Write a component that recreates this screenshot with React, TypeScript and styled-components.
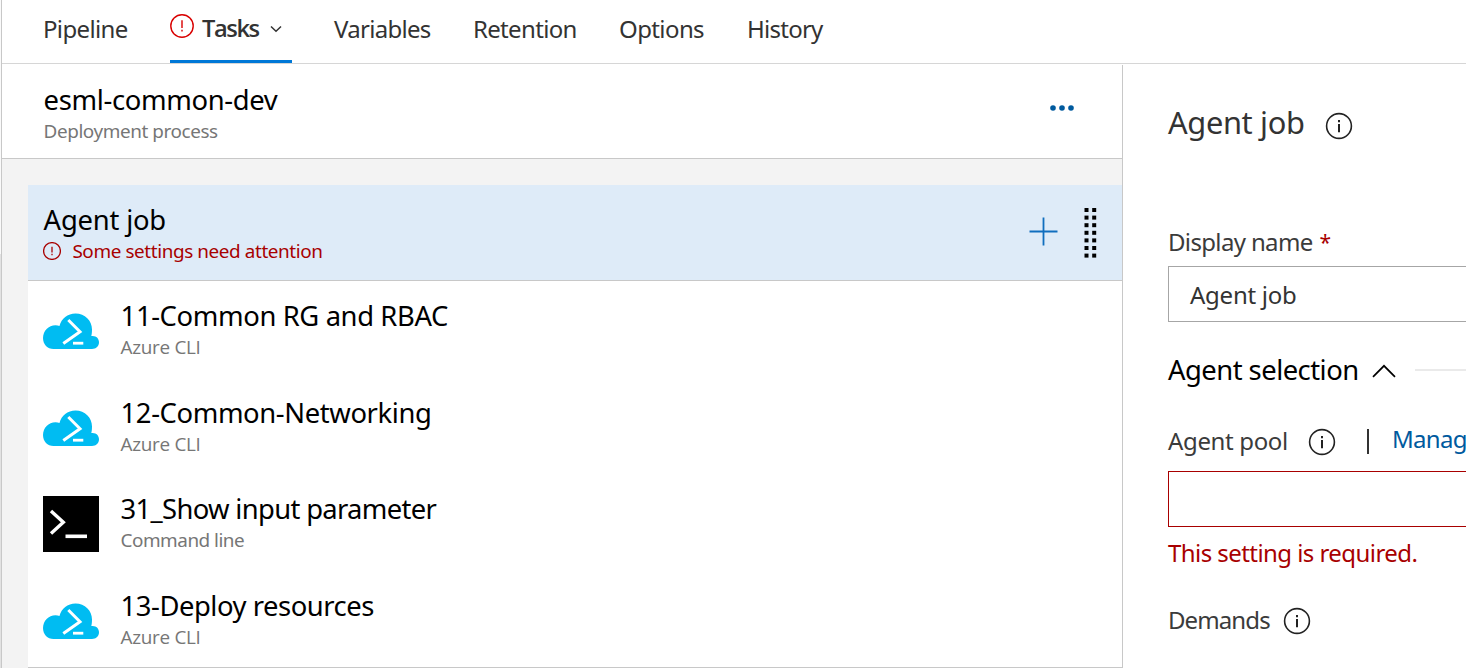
import React from 'react';
import styled, { createGlobalStyle } from 'styled-components';

const Global = createGlobalStyle`
  *, *::before, *::after { box-sizing: border-box; }
  body { margin: 0; background: #fff; overflow: hidden; }
  body, input, button { font-family: "Noto Sans", "Open Sans", sans-serif; }
  svg { display: block; flex: none; }
`;

const Page = styled.div`
  height: 668px;
  overflow: hidden;
  display: flex;
  flex-direction: column;
  padding-left: 1px;
  background: linear-gradient(#fafafa 254px, #e2e2e2 254px);
`;

const Frame = styled.div`
  flex: 1;
  min-height: 0;
  display: flex;
  flex-direction: column;
  border-left: 1px solid #c8c8c8;
  background: #fff;
`;

const Nav = styled.nav`
  height: 64px;
  flex: none;
  display: flex;
  align-items: stretch;
  gap: 42px;
  padding-left: 41px;
  border-bottom: 1px solid #d6d6d6;
  color: #333;
  font-size: 24px;
  line-height: 58px;
`;

const Tab = styled.a<{ $w: number; $track: number }>`
  width: ${(p) => p.$w}px;
  letter-spacing: ${(p) => p.$track}px;
  white-space: nowrap;
`;

const ActiveTab = styled.a`
  width: 122px;
  display: flex;
  align-items: flex-start;
  border-bottom: 3px solid #0078d7;
  font-family: "Open Sans", sans-serif;
  font-weight: 600;
  font-size: 23.7px;
  line-height: 56px;
  letter-spacing: -1.4px;
`;

const TabAlert = styled.span`
  margin: 14px 8px 0 0;
`;

const TabChevron = styled.span`
  margin: 25px 0 0 auto;
  padding-right: 10px;
`;

const Body = styled.div`
  flex: 1;
  min-height: 0;
  display: flex;
`;

const Left = styled.section`
  width: 1121px;
  flex: none;
  display: flex;
  flex-direction: column;
  margin-top: 1px;
  border-right: 1px solid #c8c8c8;
`;

const StageHeader = styled.header`
  height: 94px;
  flex: none;
  display: flex;
  justify-content: space-between;
  padding: 17px 48px 0 41.6px;
  border-bottom: 1px solid #c8c8c8;
`;

const MoreButton = styled.span`
  padding-top: 23px;
`;

const JobArea = styled.div`
  flex: 1;
  background: #f3f3f3;
  padding: 26px 0 0 26px;
`;

const JobCard = styled.div`
  background: #fff;
  border-bottom: 1px solid #c8c8c8;
`;

const JobRow = styled.div`
  height: 96px;
  display: flex;
  padding: 17px 25px 0 15px;
  background: #deebf8;
  border-bottom: 1px solid #c8c8c8;
`;

const JobTitle = styled.div`
  padding-left: 0.6px;
`;

const JobActions = styled.div`
  margin-left: auto;
  display: flex;
  align-items: flex-start;
  gap: 26px;
  padding-top: 6px;
`;

const AddButton = styled.span`
  padding-top: 8.5px;
`;

const TaskRow = styled.div`
  height: 96.5px;
  display: flex;
  gap: 21.6px;
  padding: 17px 0 0 15px;
`;

const TaskIcon = styled.div`
  padding-top: 5px;
  width: 56px;
`;

const Name = styled.div<{ $track: number }>`
  font-size: 27.4px;
  line-height: 35px;
  letter-spacing: ${(p) => p.$track}px;
  color: #000;
  white-space: nowrap;
`;

const Kind = styled.div<{ $track: number; $plain?: boolean }>`
  font-family: ${(p) => (p.$plain ? '"Open Sans"' : '"Noto Sans"')}, sans-serif;
  font-size: 18.9px;
  line-height: 28px;
  letter-spacing: ${(p) => p.$track}px;
  color: #767676;
  white-space: nowrap;
`;

const Warning = styled(Kind)`
  display: flex;
  align-items: center;
  gap: 11.4px;
  margin-left: -0.6px;
  color: #a80000;
`;

const Details = styled.section`
  flex: 1;
  min-width: 0;
  overflow: hidden;
  display: flex;
  flex-direction: column;
  padding-left: 45px;
  white-space: nowrap;
`;

const DetailsHeader = styled.div`
  display: flex;
  gap: 20px;
  height: 119px;
  margin-top: 38px;
`;

const Title = styled.h1`
  margin: 0;
  font-size: 30.8px;
  font-weight: 400;
  line-height: 40px;
  letter-spacing: -0.35px;
  color: #333;
`;

const TitleInfo = styled.span`
  padding-top: 10px;
`;

const FieldLabel = styled.div<{ $track: number; $h: number }>`
  display: flex;
  align-items: flex-start;
  height: ${(p) => p.$h}px;
  flex: none;
  font-size: 24px;
  line-height: 42px;
  letter-spacing: ${(p) => p.$track}px;
  color: #3b3b3b;
`;

const Required = styled.span`
  margin-left: 7px;
  font-size: 21px;
  color: #a80000;
`;

const LabelInfo = styled.span<{ $left: number }>`
  padding-top: 8px;
  margin-left: ${(p) => p.$left}px;
`;

const TextInput = styled.div<{ $invalid?: boolean }>`
  width: 600px;
  height: 56px;
  flex: none;
  padding-left: 21px;
  border: 1px solid ${(p) => (p.$invalid ? '#a80000' : '#a6a6a6')};
  font-size: 24px;
  line-height: 56px;
  letter-spacing: -0.25px;
  color: #333;
`;

const GroupHeader = styled.div`
  display: flex;
  height: 98px;
  flex: none;
  padding-top: 28px;
  font-size: 27.4px;
  line-height: 40px;
  letter-spacing: -0.52px;
  color: #000;
`;

const GroupChevron = styled.span`
  padding: 14px 19px 0 13px;
`;

const GroupRule = styled.span`
  flex: 1;
  height: 2px;
  margin-top: 19px;
  background: #eaeaea;
`;

const Divider = styled.span`
  width: 2px;
  height: 25px;
  flex: none;
  margin: 9px 23px 0 31px;
  background: #333;
`;

const Link = styled.a`
  line-height: 38px;
  letter-spacing: -0.65px;
  color: #005a9e;
`;

const ErrorText = styled.div`
  height: 72px;
  flex: none;
  font-size: 24px;
  line-height: 51px;
  letter-spacing: -0.56px;
  color: #a80000;
`;

const AlertIcon = ({ size, color, stroke }: { size: number; color: string; stroke: number }) => (
  <svg width={size} height={size} viewBox="0 0 24 24" fill="none">
    <circle cx="12" cy="12" r="11.2" stroke={color} strokeWidth={stroke} />
    <path d="M12 6.3v7.6M12 15.8v1.8" stroke={color} strokeWidth={stroke} />
  </svg>
);

const InfoIcon = () => (
  <svg width="28" height="28" viewBox="0 0 28 28" fill="none">
    <circle cx="14" cy="14" r="12.4" stroke="#222" strokeWidth="1.6" />
    <path d="M14 12v8.2M14 8v2.2" stroke="#222" strokeWidth="2" />
  </svg>
);

const CloudIcon = () => (
  <svg width="56" height="56" viewBox="0 0 56 56" fill="none">
    <path
      d="M10.5 46C4.5 46 0 41.5 0 35C0 28 5.5 22.3 12.5 22.3C14 22.3 15.4 22.5 16.500 22.9C18.5 15.5 24.5 10.5 32.5 10.5C42 10.5 49 17.5 49 26.5C49 29 48.8 31 48.3 33C53 32.3 56 35.3 56 39.3C56 43.300 53 46 49 46Z"
      fill="#00bcf2"
    />
    <path d="M25.3 17L37 28.7L20.3 40.5" stroke="#fff" strokeWidth="3" />
    <path d="M30 40.2H40.3" stroke="#fff" strokeWidth="2.8" />
  </svg>
);

const TerminalIcon = () => (
  <svg width="56" height="56" viewBox="0 0 56 56" fill="none">
    <path d="M0 0H56V56H0Z" fill="#000" />
    <path d="M8 15L20.3 26.3L8 37.5" stroke="#fff" strokeWidth="3.4" />
    <path d="M22.5 40.3H44" stroke="#fff" strokeWidth="3.6" />
  </svg>
);

const DotsIcon = () => (
  <svg width="24" height="6" viewBox="0 0 24 6" fill="#005a9e">
    <circle cx="3" cy="3" r="2.8" />
    <circle cx="12" cy="3" r="2.8" />
    <circle cx="21" cy="3" r="2.8" />
  </svg>
);

const PlusIcon = () => (
  <svg width="29" height="29" viewBox="0 0 29 29">
    <path d="M14.5 0.5V28.5M0.5 14.5H28.5" stroke="#106ebe" strokeWidth="1.8" />
  </svg>
);

const GripIcon = () => (
  <svg width="13" height="50" viewBox="0 0 13 50" fill="#000">
    {[0, 1, 2, 3, 4, 5, 6].map((i) => (
      <React.Fragment key={i}>
        <rect x="0.5" y={i * 7.6} width="4" height="4" />
        <rect x="8.2" y={i * 7.6} width="4" height="4" />
      </React.Fragment>
    ))}
  </svg>
);

const tasks = [
  { name: '11-Common RG and RBAC', track: -0.38, kind: 'Azure CLI', cli: true },
  { name: '12-Common-Networking', track: -0.39, kind: 'Azure CLI', cli: true },
  { name: '31_Show input parameter', track: -0.67, kind: 'Command line', cli: false },
  { name: '13-Deploy resources', track: -0.45, kind: 'Azure CLI', cli: true },
];

export default function App() {
  return (
    <Page>
      <Global />
      <Frame>
        <Nav>
          <Tab $w={85} $track={-0.65}>Pipeline</Tab>
          <ActiveTab>
            <TabAlert><AlertIcon size={24} color="#d90000" stroke={1.4} /></TabAlert>
            Tasks
            <TabChevron>
              <svg width="12" height="8" viewBox="0 0 12 8" fill="none">
                <path d="M1 1.5L6 6.3L11 1.5" stroke="#333" strokeWidth="1.5" />
              </svg>
            </TabChevron>
          </ActiveTab>
          <Tab $w={97} $track={-0.7}>Variables</Tab>
          <Tab $w={104} $track={-0.67}>Retention</Tab>
          <Tab $w={86} $track={-0.6}>Options</Tab>
          <Tab $w={77} $track={-0.75}>History</Tab>
        </Nav>
        <Body>
          <Left>
            <StageHeader>
              <div>
                <Name $track={-0.35}>esml-common-dev</Name>
                <Kind $track={-0.42}>Deployment process</Kind>
              </div>
              <MoreButton><DotsIcon /></MoreButton>
            </StageHeader>
            <JobArea>
              <JobCard>
                <JobRow>
                  <JobTitle>
                    <Name $track={-0.2}>Agent job</Name>
                    <Warning $track={-0.4}>
                      <AlertIcon size={18} color="#a80000" stroke={1.7} />
                      Some settings need attention
                    </Warning>
                  </JobTitle>
                  <JobActions>
                    <AddButton><PlusIcon /></AddButton>
                    <GripIcon />
                  </JobActions>
                </JobRow>
                {tasks.map((t) => (
                  <TaskRow key={t.name}>
                    <TaskIcon>{t.cli ? <CloudIcon /> : <TerminalIcon />}</TaskIcon>
                    <div>
                      <Name $track={t.track}>{t.name}</Name>
                      <Kind $track={t.cli ? -0.3 : -0.5} $plain={t.cli}>{t.kind}</Kind>
                    </div>
                  </TaskRow>
                ))}
              </JobCard>
            </JobArea>
          </Left>
          <Details>
            <DetailsHeader>
              <Title>Agent job</Title>
              <TitleInfo><InfoIcon /></TitleInfo>
            </DetailsHeader>
            <FieldLabel $track={-0.65} $h={45}>
              Display name<Required>*</Required>
            </FieldLabel>
            <TextInput>Agent job</TextInput>
            <GroupHeader>
              Agent selection
              <GroupChevron>
                <svg width="24" height="14" viewBox="0 0 24 14" fill="none">
                  <path d="M1 12.8L12 1.8L23 12.8" stroke="#000" strokeWidth="1.7" />
                </svg>
              </GroupChevron>
              <GroupRule />
            </GroupHeader>
            <FieldLabel $track={-0.35} $h={51}>
              Agent pool
              <LabelInfo $left={20}><InfoIcon /></LabelInfo>
              <Divider />
              <Link>Manag</Link>
            </FieldLabel>
            <TextInput $invalid />
            <ErrorText>This setting is required.</ErrorText>
            <FieldLabel $track={-0.9} $h={46}>
              Demands
              <LabelInfo $left={13.5}><InfoIcon /></LabelInfo>
            </FieldLabel>
          </Details>
        </Body>
      </Frame>
    </Page>
  );
}
